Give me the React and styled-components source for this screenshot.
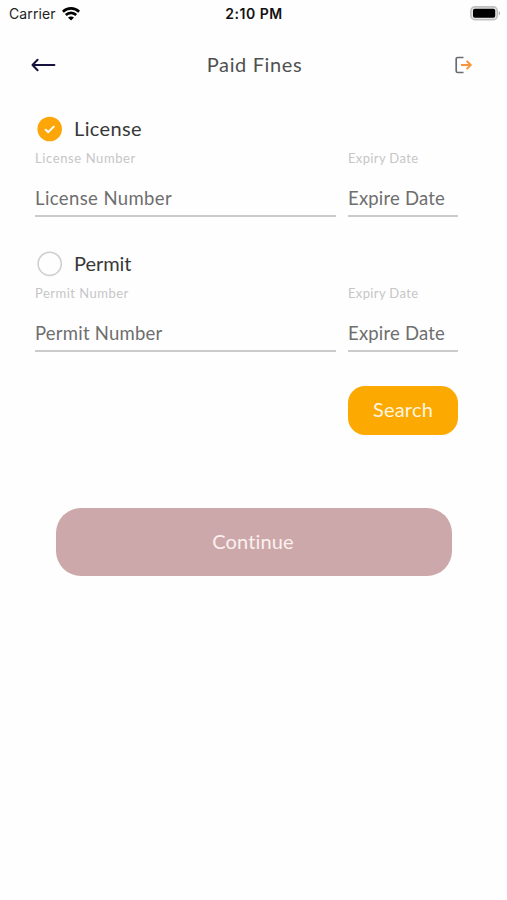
import React from 'react';
import styled, { createGlobalStyle } from 'styled-components';

const GlobalStyle = createGlobalStyle`
  * { box-sizing: border-box; }
  body { margin: 0; background: #fefefe; }
`;

const Screen = styled.main`
  height: 900px;
  background: #fefefe;
  font-family: Lato, sans-serif;
  overflow: hidden;
`;

const StatusBar = styled.div`
  display: grid;
  grid-template-columns: 1fr auto 1fr;
  align-items: center;
  height: 27px;
  padding: 0 6px 0 9px;
  font: 400 14px/27px Inter, sans-serif;
  color: #222;
`;

const Carrier = styled.div`
  display: flex;
  align-items: center;
  gap: 6px;
  letter-spacing: 0.1px;
`;

const Clock = styled.div`
  font-weight: 600;
  letter-spacing: 0.5px;
  color: #111;
  padding-right: 2px;
`;

const BatterySlot = styled.div`
  display: flex;
  justify-content: flex-end;
`;

const Header = styled.header`
  display: flex;
  align-items: center;
  justify-content: space-between;
  height: 76px;
  padding: 0 34px 0 31px;
`;

const Title = styled.h1`
  margin: 0;
  padding: 0 2px 2px 0;
  font-size: 20px;
  font-weight: 400;
  line-height: 26px;
  letter-spacing: 0.62px;
  color: #505050;
`;

const IconButton = styled.button`
  display: flex;
  padding: 0;
  border: 0;
  background: none;
`;

const Form = styled.form`
  display: flex;
  flex-direction: column;
  padding: 13px 49px 0 35px;
`;

const Section = styled.section`
  margin-bottom: 33.5px;
`;

const Choice = styled.div`
  display: flex;
  align-items: center;
  gap: 11px;
  height: 26px;
  padding-left: 2px;
  font-size: 20px;
  line-height: 26px;
  letter-spacing: ${(p) => p.$spacing}px;
  color: #383838;
`;

const ChoiceName = styled.span`
  padding-bottom: 2px;
`;

const Fields = styled.div`
  display: grid;
  grid-template-columns: 301px 110px;
  gap: 12px;
  margin-top: 7px;
`;

const Label = styled.label`
  display: block;
  font-size: 13px;
  line-height: 18px;
  letter-spacing: ${(p) => p.$spacing}px;
  color: #c6c6c8;
`;

const Input = styled.input`
  display: block;
  width: 100%;
  height: 35px;
  margin-top: 15px;
  padding: 0 0 1px;
  border: 0;
  border-bottom: 2px solid #cbcbcb;
  border-radius: 0;
  outline: 0;
  background: transparent;
  font: 400 18.5px Lato, sans-serif;
  letter-spacing: ${(p) => p.$spacing}px;
  color: #666;

  &::placeholder {
    color: #6e6e6e;
    opacity: 1;
  }
`;

const SearchButton = styled.button`
  align-self: flex-end;
  width: 110px;
  height: 49px;
  margin-top: 1px;
  padding: 0 0 3px;
  border: 0;
  border-radius: 17px;
  background: #fca902;
  font: 400 20px Lato, sans-serif;
  letter-spacing: 0.2px;
  color: #fff5e0;
`;

const ContinueButton = styled.button`
  display: block;
  width: 396px;
  height: 68px;
  margin: 73px 0 0 56px;
  padding: 0 2px 2px 0;
  border: 0;
  border-radius: 25px;
  background: #cca8aa;
  font: 400 20px Lato, sans-serif;
  letter-spacing: 0.12px;
  color: #fcf0f0;
`;

function WifiIcon() {
  return (
    <svg width="18" height="14" viewBox="0 0 18 14" fill="none" stroke="#000" strokeWidth="2.6">
      <path d="M0.9 4.7C5.4 0.3 12.6 0.3 17.1 4.7" />
      <path d="M3.8 8C6.7 5.1 11.3 5.1 14.2 8" />
      <path d="M9 13.6L6 10.6C7.6 9 10.4 9 12 10.6Z" fill="#000" stroke="none" />
    </svg>
  );
}

function BatteryIcon() {
  return (
    <svg width="31" height="15" viewBox="0 0 31 15">
      <rect x="0.9" y="0.9" width="26.4" height="12.8" rx="4" fill="#e4e4e4" stroke="#c0c0c0" strokeWidth="1.6" />
      <rect x="3" y="2.8" width="22.2" height="9" rx="1.8" fill="#000" />
      <path d="M28.8 5.2C30.5 5.8 30.5 8.8 28.8 9.4Z" fill="#aaa" />
    </svg>
  );
}

function BackIcon() {
  return (
    <svg width="25" height="14" viewBox="0 0 25 14" fill="none" stroke="#17133f" strokeWidth="2" strokeLinecap="round" strokeLinejoin="round">
      <path d="M23.4 7H1.7M6.6 1.7L1.5 7L6.6 12.3" />
    </svg>
  );
}

function LogoutIcon() {
  return (
    <svg width="18" height="18" viewBox="0 0 18 18" fill="none" strokeWidth="1.7" strokeLinejoin="round">
      <path d="M8.5 1.5H2.8Q1.2 1.5 1.2 3.1V14.9Q1.2 16.5 2.8 16.5H8.5" stroke="#6c6a72" />
      <path d="M6 9H15.8M11.6 4.8L15.8 9L11.6 13.2" stroke="#f9943b" strokeWidth="1.9" />
    </svg>
  );
}

function RadioIcon({ checked }) {
  return (
    <svg width="26" height="26" viewBox="0 0 26 26" fill="none">
      {checked ? (
        <>
          <circle cx="12.7" cy="13" r="12.3" fill="#fca60a" />
          <path d="M8.1 13.2L11.2 16.1L17.3 10.1" stroke="#fff" strokeWidth="2" />
        </>
      ) : (
        <circle cx="12.7" cy="12.8" r="11.6" stroke="#cfcfcf" strokeWidth="1.6" />
      )}
    </svg>
  );
}

const documents = [
  { name: 'License', checked: true, choiceSpacing: 0.36, labelSpacing: 0.6, inputSpacing: 0.4 },
  { name: 'Permit', checked: false, choiceSpacing: -0.05, labelSpacing: 0.48, inputSpacing: 0.23 },
];

export default function App() {
  return (
    <Screen>
      <GlobalStyle />
      <StatusBar>
        <Carrier>
          Carrier
          <WifiIcon />
        </Carrier>
        <Clock>2:10 PM</Clock>
        <BatterySlot>
          <BatteryIcon />
        </BatterySlot>
      </StatusBar>
      <Header>
        <IconButton aria-label="Back">
          <BackIcon />
        </IconButton>
        <Title>Paid Fines</Title>
        <IconButton aria-label="Log out">
          <LogoutIcon />
        </IconButton>
      </Header>
      <Form onSubmit={(e) => e.preventDefault()}>
        {documents.map((d) => (
          <Section key={d.name}>
            <Choice $spacing={d.choiceSpacing}>
              <RadioIcon checked={d.checked} />
              <ChoiceName>{d.name}</ChoiceName>
            </Choice>
            <Fields>
              <div>
                <Label $spacing={d.labelSpacing}>{d.name} Number</Label>
                <Input $spacing={d.inputSpacing} placeholder={`${d.name} Number`} />
              </div>
              <div>
                <Label $spacing={0.36}>Expiry Date</Label>
                <Input $spacing={0.2} placeholder="Expire Date" />
              </div>
            </Fields>
          </Section>
        ))}
        <SearchButton>Search</SearchButton>
      </Form>
      <ContinueButton>Continue</ContinueButton>
    </Screen>
  );
}
